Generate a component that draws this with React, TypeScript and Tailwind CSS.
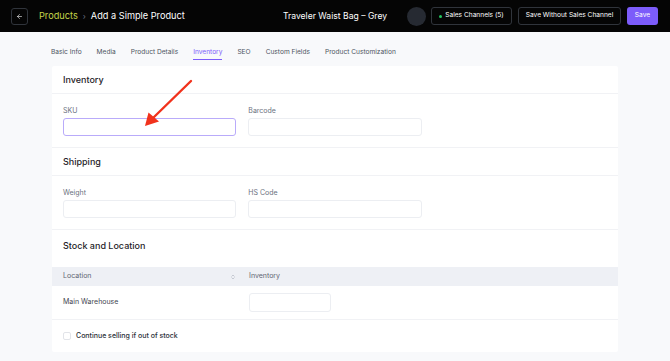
import { ArrowLeft, ChevronsUpDown } from "lucide-react";

const tabs = [
  "Basic Info",
  "Media",
  "Product Details",
  "Inventory",
  "SEO",
  "Custom Fields",
  "Product Customization",
];

function Field({ label, focused }: { label: string; focused?: boolean }) {
  return (
    <div className="flex flex-col">
      <label className="text-[7px] leading-[10px] text-[#6b7280] mb-[2px]">
        {label}
      </label>
      <div
        className={
          focused
            ? "h-[18px] rounded-[3px] border border-[#b9abfa] bg-white"
            : "h-[18px] rounded-[3px] border border-[#eceef2] bg-white"
        }
      />
    </div>
  );
}

function SectionTitle({ children }: { children: string }) {
  return (
    <h2 className="text-[9px] leading-[12px] font-medium text-[#1f2328]">
      {children}
    </h2>
  );
}

export default function App() {
  return (
    <div
      className="w-[670px] h-[361px] overflow-hidden bg-[#f8f9fb] relative"
      style={{ fontFamily: "Inter, 'Noto Sans', sans-serif" }}
    >
      {/* Top bar */}
      <header className="h-[32px] bg-[#050505] grid grid-cols-[1fr_auto_1fr] items-center px-[11px]">
        <div className="flex items-center">
          <button className="w-[17px] h-[17px] rounded-[3px] border border-[#30343b] flex items-center justify-center text-white">
            <ArrowLeft size={7} strokeWidth={2} />
          </button>
          <span className="ml-[11px] text-[9.2px] text-[#c5d64a]">Products</span>
          <span className="mx-[5px] text-[8px] text-[#6b7280]">›</span>
          <span className="text-[9.2px] text-white">Add a Simple Product</span>
        </div>
        <div className="text-[8.6px] text-white">Traveler Waist Bag – Grey</div>
        <div className="flex items-center justify-end gap-[5px] pr-[1px]">
          <div className="w-[19px] h-[19px] rounded-full bg-[#262a32]" />
          <button className="h-[18px] w-[81px] rounded-[3px] border border-[#30343b] flex items-center justify-center gap-[3px] text-[6.6px] text-white">
            <span className="w-[3px] h-[3px] rounded-full bg-[#22c55e]" />
            Sales Channels (5)
          </button>
          <button className="ml-[1px] h-[18px] w-[103px] rounded-[3px] border border-[#30343b] flex items-center justify-center text-[6.6px] text-white">
            Save Without Sales Channel
          </button>
          <button className="ml-[1px] h-[18px] w-[31px] rounded-[3px] bg-[#7c5cfa] flex items-center justify-center text-[6.6px] text-white">
            Save
          </button>
        </div>
      </header>

      {/* Tabs */}
      <nav className="flex gap-[15px] px-[51px] h-[34px] items-start pt-[16px]">
        {tabs.map((t) => (
          <div key={t} className="flex flex-col">
            <span
              className={
                t === "Inventory"
                  ? "text-[6.6px] leading-[8px] text-[#7c5cfa]"
                  : "text-[6.6px] leading-[8px] text-[#4d5461]"
              }
            >
              {t}
            </span>
            {t === "Inventory" && (
              <span className="mt-[3px] h-[1px] bg-[#7c5cfa]" />
            )}
          </div>
        ))}
      </nav>

      {/* Card */}
      <div className="mx-[52px] bg-white rounded-[2px]">
        <div className="h-[28px] px-[11px] flex items-center border-b border-[#f1f2f5]">
          <SectionTitle>Inventory</SectionTitle>
        </div>
        <div className="px-[11px] pt-[12px] pb-[11px] grid grid-cols-3 gap-x-[12px] border-b border-[#f1f2f5]">
          <Field label="SKU" focused />
          <Field label="Barcode" />
        </div>

        <div className="h-[28px] px-[11px] flex items-center border-b border-[#f1f2f5]">
          <SectionTitle>Shipping</SectionTitle>
        </div>
        <div className="px-[11px] pt-[12px] pb-[11px] grid grid-cols-3 gap-x-[12px] border-b border-[#f1f2f5]">
          <Field label="Weight" />
          <Field label="HS Code" />
        </div>

        <div className="h-[37px] px-[11px] pt-[10px]">
          <SectionTitle>Stock and Location</SectionTitle>
        </div>

        {/* Stock table */}
        <div className="h-[19px] bg-[#eef0f5] grid grid-cols-[197px_1fr] items-center text-[7px] text-[#5f6673]">
          <div className="pl-[11px] pr-[13px] flex items-center justify-between">
            <span>Location</span>
            <ChevronsUpDown size={6} className="text-[#9ca3af]" />
          </div>
          <span>Inventory</span>
        </div>
        <div className="h-[34px] grid grid-cols-[197px_1fr] items-center border-b border-[#f1f2f5]">
          <span className="pl-[11px] text-[7px] text-[#3f4550]">Main Warehouse</span>
          <div className="w-[82px] h-[19px] rounded-[3px] border border-[#eceef2]" />
        </div>
        <div className="h-[32px] px-[11px] flex items-center gap-[5px]">
          <span className="w-[8px] h-[8px] rounded-[2px] border border-[#e2e4e9]" />
          <span className="text-[7px] font-medium text-[#2a2f37]">
            Continue selling if out of stock
          </span>
        </div>
      </div>

      {/* Annotation arrow */}
      <svg
        className="absolute left-0 top-0 pointer-events-none"
        width="670"
        height="361"
        viewBox="0 0 670 361"
      >
        <line
          x1="191"
          y1="81"
          x2="153"
          y2="118"
          stroke="#f1321c"
          strokeWidth="2.4"
          strokeLinecap="round"
        />
        <polygon points="145,126 148.5,112.5 159,121.5" fill="#f1321c" />
      </svg>
    </div>
  );
}
